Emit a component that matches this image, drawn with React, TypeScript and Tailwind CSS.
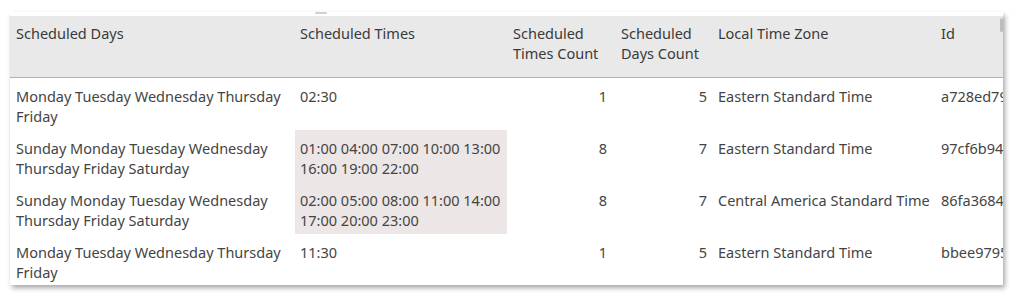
import React from 'react';

interface Row {
  days: string;
  times: string;
  timesCount: number;
  daysCount: number;
  zone: string;
  id: string;
  highlight?: boolean;
}

const rows: Row[] = [
  {
    days: 'Monday Tuesday Wednesday Thursday Friday',
    times: '02:30',
    timesCount: 1,
    daysCount: 5,
    zone: 'Eastern Standard Time',
    id: 'a728ed79',
  },
  {
    days: 'Sunday Monday Tuesday Wednesday Thursday Friday Saturday',
    times: '01:00 04:00 07:00 10:00 13:00 16:00 19:00 22:00',
    timesCount: 8,
    daysCount: 7,
    zone: 'Eastern Standard Time',
    id: '97cf6b94',
    highlight: true,
  },
  {
    days: 'Sunday Monday Tuesday Wednesday Thursday Friday Saturday',
    times: '02:00 05:00 08:00 11:00 14:00 17:00 20:00 23:00',
    timesCount: 8,
    daysCount: 7,
    zone: 'Central America Standard Time',
    id: '86fa3684',
    highlight: true,
  },
  {
    days: 'Monday Tuesday Wednesday Thursday Friday',
    times: '11:30',
    timesCount: 1,
    daysCount: 5,
    zone: 'Eastern Standard Time',
    id: 'bbee9795',
  },
];

const cols = 'grid grid-cols-[285px_212px_107px_98px_223px_1fr]';

export default function App() {
  return (
    <div className="w-[1024px] h-[305px] bg-white pt-[12px] pl-[10px] font-['Noto_Sans','Open_Sans',sans-serif] text-[14.5px] leading-[20px] text-[#444]">
      <div className="relative w-[993px] h-[273px] bg-white pt-[4px] overflow-hidden shadow-[2px_3px_5px_rgba(0,0,0,0.35)]">
        <div className="absolute left-[305px] top-0 w-[12px] h-[2px] bg-[#d0d0d0] rounded" />
        <div className={`${cols} h-[62px] bg-[#e9e9e9] border-b border-[#a4b0cc] text-[#3a3a3a]`}>
          <div className="px-[6px] pt-[7px]">Scheduled Days</div>
          <div className="px-[5px] pt-[7px]">Scheduled Times</div>
          <div className="px-[6px] pt-[7px]">Scheduled Times Count</div>
          <div className="px-[7px] pt-[7px]">Scheduled Days Count</div>
          <div className="px-[6px] pt-[7px]">Local Time Zone</div>
          <div className="px-[6px] pt-[7px] whitespace-nowrap">Id</div>
        </div>
        {rows.map((r) => (
          <div key={r.id} className={`${cols} h-[52px]`}>
            <div className="px-[6px] pt-[8px]">{r.days}</div>
            <div className={`px-[5px] pt-[8px] ${r.highlight ? 'bg-[#ece6e6]' : ''}`}>{r.times}</div>
            <div className="px-[7px] pt-[8px] text-right">{r.timesCount}</div>
            <div className="px-[5px] pt-[8px] text-right">{r.daysCount}</div>
            <div className="px-[6px] pt-[8px] whitespace-nowrap">{r.zone}</div>
            <div className="px-[6px] pt-[8px] whitespace-nowrap overflow-hidden">{r.id}</div>
          </div>
        ))}
        <div className="absolute right-0 top-[6px] w-[3px] h-[14px] bg-[#bdbdbd] rounded" />
      </div>
    </div>
  );
}
